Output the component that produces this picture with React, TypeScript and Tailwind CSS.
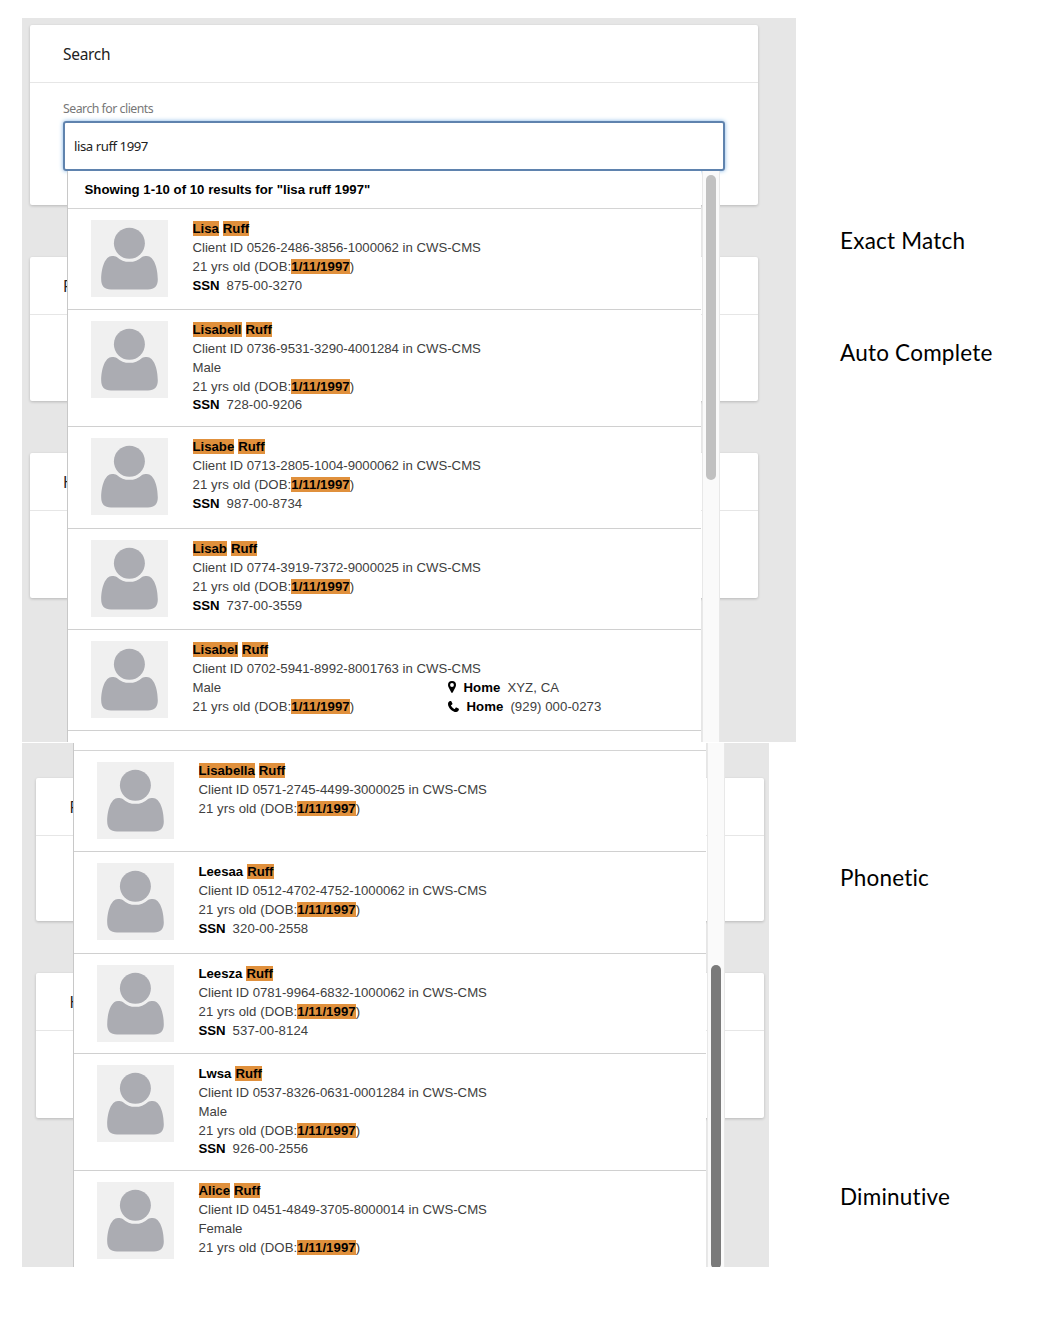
import React from "react";

type Word = { text: string; hit?: boolean };

type Client = {
  name: Word[];
  id: string;
  gender?: string;
  ssn?: string;
  address?: string;
  phone?: string;
  height: string;
};

const hit = (text: string): Word => ({ text, hit: true });

const firstPage: Client[] = [
  { name: [hit("Lisa"), hit("Ruff")], id: "0526-2486-3856-1000062", ssn: "875-00-3270", height: "h-[101px]" },
  { name: [hit("Lisabell"), hit("Ruff")], id: "0736-9531-3290-4001284", gender: "Male", ssn: "728-00-9206", height: "h-[117px]" },
  { name: [hit("Lisabe"), hit("Ruff")], id: "0713-2805-1004-9000062", ssn: "987-00-8734", height: "h-[102px]" },
  { name: [hit("Lisab"), hit("Ruff")], id: "0774-3919-7372-9000025", ssn: "737-00-3559", height: "h-[101px]" },
  { name: [hit("Lisabel"), hit("Ruff")], id: "0702-5941-8992-8001763", gender: "Male", address: "XYZ, CA", phone: "(929) 000-0273", height: "h-[101px]" },
];

const secondPage: Client[] = [
  { name: [hit("Lisabella"), hit("Ruff")], id: "0571-2745-4499-3000025", height: "h-[101px]" },
  { name: [{ text: "Leesaa" }, hit("Ruff")], id: "0512-4702-4752-1000062", ssn: "320-00-2558", height: "h-[102px]" },
  { name: [{ text: "Leesza" }, hit("Ruff")], id: "0781-9964-6832-1000062", ssn: "537-00-8124", height: "h-[100px]" },
  { name: [{ text: "Lwsa" }, hit("Ruff")], id: "0537-8326-0631-0001284", gender: "Male", ssn: "926-00-2556", height: "h-[117px]" },
  { name: [hit("Alice"), hit("Ruff")], id: "0451-4849-3705-8000014", gender: "Female", height: "h-[101px]" },
];

function Mark({ children }: { children: React.ReactNode }) {
  return <mark className="inline-block h-[15px] bg-[#e0903c] font-bold leading-[15px] text-black">{children}</mark>;
}

function Avatar() {
  return (
    <svg viewBox="0 0 77 77" className="size-[77px] shrink-0 bg-[#f0f0f0]" fill="#abacb2">
      <circle cx="38.4" cy="23.2" r="15.5" />
      <path d="M21 36C23 36 24.500 36.300 25.800 36.900A18.500 18.500 0 0 0 51 36.900C52.300 36.300 53.800 36 55.800 36C63 36 66.800 48 66.800 59.500C66.800 66 63.500 69.500 57 69.500H20C13.500 69.500 10.200 66 10.200 59.500C10.200 48 14 36 21 36Z" />
    </svg>
  );
}

function PinIcon() {
  return (
    <svg viewBox="0 0 8 12" className="h-[12px] w-[8px]">
      <path fillRule="evenodd" d="M4 0a4 4 0 0 1 4 4c0 1-.3 1.6-.7 2.400L4.700 11.500Q4 12.400 3.300 11.500L.7 6.400C.3 5.600 0 5 0 4a4 4 0 0 1 4-4ZM4 2.100a1.900 1.900 0 1 0 0 3.800a1.900 1.900 0 0 0 0-3.800Z" />
    </svg>
  );
}

function PhoneIcon() {
  return (
    <svg viewBox="0 0 11 11" className="h-[11px] w-[11px]">
      <path d="M2.400.1C1 .4 0 1.400 0 2.900C0 6.500 4.500 11 8.100 11C9.600 11 10.600 10 10.900 8.600C11 8 10.900 7.900 10.400 7.600L8.500 6.600C8 6.400 7.900 6.500 7.500 6.900L6.700 7.900C6.400 8.100 6.200 8 5.900 7.800C4.700 7.100 3.900 6.300 3.200 5.100C3 4.800 2.900 4.600 3.100 4.300L4.100 3.500C4.500 3.100 4.600 3 4.400 2.500L3.400.6C3.100.1 3 0 2.400.1Z" />
    </svg>
  );
}

function ClientRow({ client }: { client: Client }) {
  return (
    <li className={`flex shrink-0 border-b border-[#d0d0d0] pl-[23px] pt-[11px] ${client.height}`}>
      <Avatar />
      <div className="ml-[24.500px] w-[254.500px] shrink-0 whitespace-nowrap pt-[0.400px] text-[13.200px] leading-[18.700px] tracking-[-0.01px] text-[#404040]">
        <p className="flex gap-[4px] font-bold text-black">
          {client.name.map((w) => (w.hit ? <span key={w.text}><Mark>{w.text}</Mark></span> : <span key={w.text}>{w.text}</span>))}
        </p>
        <p>Client ID {client.id} in CWS-CMS</p>
        {client.gender && <p>{client.gender}</p>}
        <p><span className="tracking-[0.080px]">21 yrs old (DOB:</span><Mark><span className="tracking-[0.050px]">1/11/1997</span></Mark>)</p>
        {client.ssn && <p><b className="mr-[7px] text-black">SSN</b><span className="tracking-[0.080px]">{client.ssn}</span></p>}
      </div>
      {client.address && (
        <div className="whitespace-nowrap pt-[37.900px] pl-[0.500px] text-[13.200px] leading-[18.750px] tracking-[0.060px] text-[#404040]">
          <p className="flex items-center"><span className="-mt-[2px]"><PinIcon /></span><b className="ml-[8px] mr-[7px] text-black">Home</b>{client.address}</p>
          <p className="flex items-center"><span className="-mt-[2px]"><PhoneIcon /></span><b className="ml-[8px] mr-[7px] text-black">Home</b>{client.phone}</p>
        </div>
      )}
    </li>
  );
}

function Card({ title, className, children }: { title: string; className: string; children?: React.ReactNode }) {
  return (
    <section className={`w-[728px] shrink-0 rounded-[2px] bg-white shadow-[0_1px_3px_rgba(0,0,0,0.2)] ${className}`}>
      <h2 className="h-[58px] border-b border-[#e6e6e6] pl-[33.500px] font-['Noto_Sans',sans-serif] text-[15.500px] leading-[58px] tracking-[-0.300px] text-[#222]">{title}</h2>
      {children}
    </section>
  );
}

function Track({ children }: { children: React.ReactNode }) {
  return <div className="ml-px w-[18px] shrink-0 border-x border-[#e8e8e8] bg-[#fafafa] pl-[3.500px]">{children}</div>;
}

function NoteLabel({ children, className }: { children: string; className: string }) {
  return <p className={`h-[30px] whitespace-nowrap font-[Lato,sans-serif] text-[22.500px] leading-[30px] tracking-[0.220px] text-black ${className}`}>{children}</p>;
}

export default function App() {
  return (
    <main className="flex h-[1321px] w-[1049px] overflow-hidden bg-white pl-[22px] pt-[18px] font-['Liberation_Sans',sans-serif]">
      <div className="w-[774px] shrink-0">
        <div className="relative flex h-[724px] flex-col overflow-hidden bg-[#e6e6e6] pl-[7.500px] pt-[7px]">
          <Card title="Search" className="h-[180px]">
            <div className="pl-[33.500px] pt-[15px] font-['Noto_Sans',sans-serif]">
              <label className="block h-[23px] text-[12.300px] leading-[21px] tracking-[-0.500px] text-[#777]">Search for clients</label>
              <div className="h-[50px] w-[662px] rounded-[3px] border-2 border-[#5f83ae] pl-[9px] text-[13.200px] leading-[47px] tracking-[-0.450px] text-[#222] shadow-[0_0_4px_#7fb4e6]">lisa ruff 1997</div>
            </div>
          </Card>
          <Card title="People" className="mt-[52px] h-[144px]" />
          <Card title="History" className="mt-[52px] h-[145px]" />
          <div className="absolute left-[45px] top-[153px] flex h-[571px]">
            <div className="w-[633.500px] overflow-hidden border-l border-[#c8c8c8] bg-white">
              <h3 className="h-[38px] border-b border-[#d4d4d4] pl-[16.500px] text-[13.200px] font-bold leading-[37px] tracking-[0.030px] text-black">Showing 1-10 of 10 results for "lisa ruff 1997"</h3>
              <ul>{firstPage.map((c) => <ClientRow key={c.id} client={c} />)}</ul>
            </div>
            <Track><div className="mt-[4px] h-[305px] w-[10px] rounded-full bg-[#c1c1c1]" /></Track>
          </div>
        </div>
        <div className="relative mt-px flex h-[524px] w-[747px] flex-col overflow-hidden bg-[#e6e6e6] pl-[14px] pt-[35px]">
          <Card title="People" className="h-[143px]" />
          <Card title="History" className="mt-[52px] h-[145px]" />
          <div className="absolute left-[51px] top-0 flex h-[524px]">
            <div className="w-[632.500px] overflow-hidden border-l border-[#c8c8c8] bg-white">
              <div className="h-[8px] border-b border-[#d4d4d4]" />
              <ul>{secondPage.map((c) => <ClientRow key={c.id} client={c} />)}</ul>
            </div>
            <Track><div className="mt-[222px] h-[304px] w-[10px] rounded-full bg-[#7a7a7a]" /></Track>
          </div>
        </div>
      </div>
      <aside className="pl-[44px]">
        <NoteLabel className="mt-[208px]">Exact Match</NoteLabel>
        <NoteLabel className="mt-[82px]">Auto Complete</NoteLabel>
        <NoteLabel className="mt-[495px]">Phonetic</NoteLabel>
        <NoteLabel className="mt-[289px]">Diminutive</NoteLabel>
      </aside>
    </main>
  );
}
